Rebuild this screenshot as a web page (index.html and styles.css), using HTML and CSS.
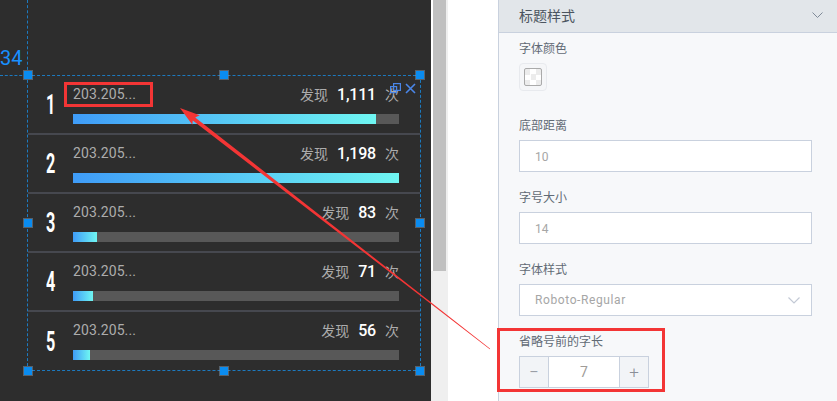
FILE: index.html
```html
<!DOCTYPE html>
<html lang="en">
<head>
    <meta charset="UTF-8">
    <title>标题样式</title>
    <link rel="stylesheet" href="styles.css">
</head>
<body>
    <div class="page">
        <div class="stage">
            <div class="guide-v"></div>
            <div class="guide-h"></div>
            <div class="guide-num">34</div>

            <div class="widget">
                <div class="row">
                    <div class="rank"><span>1</span></div>
                    <div class="main">
                        <div class="head"><span class="ip">203.205...</span><span class="tip">发现</span><span class="num">1,111</span><span class="tip">次</span></div>
                        <div class="track"><div class="fill" style="width: 303px"></div></div>
                    </div>
                </div>
                <div class="row">
                    <div class="rank"><span>2</span></div>
                    <div class="main">
                        <div class="head"><span class="ip">203.205...</span><span class="tip">发现</span><span class="num">1,198</span><span class="tip">次</span></div>
                        <div class="track"><div class="fill" style="width: 326px"></div></div>
                    </div>
                </div>
                <div class="row">
                    <div class="rank"><span>3</span></div>
                    <div class="main">
                        <div class="head"><span class="ip">203.205...</span><span class="tip">发现</span><span class="num">83</span><span class="tip">次</span></div>
                        <div class="track"><div class="fill" style="width: 24px"></div></div>
                    </div>
                </div>
                <div class="row">
                    <div class="rank"><span>4</span></div>
                    <div class="main">
                        <div class="head"><span class="ip">203.205...</span><span class="tip">发现</span><span class="num">71</span><span class="tip">次</span></div>
                        <div class="track"><div class="fill" style="width: 20px"></div></div>
                    </div>
                </div>
                <div class="row last">
                    <div class="rank"><span>5</span></div>
                    <div class="main">
                        <div class="head"><span class="ip">203.205...</span><span class="tip">发现</span><span class="num">56</span><span class="tip">次</span></div>
                        <div class="track"><div class="fill" style="width: 17px"></div></div>
                    </div>
                </div>

                <!-- widget tools and resize handles -->
                <div class="tools">
                    <svg width="11" height="11" viewBox="0 0 11 11" fill="none" stroke="#4a86e8" stroke-width="1.2">
                        <rect x="3.6" y="0.6" width="6.8" height="6.8"/>
                        <rect x="0.6" y="3.6" width="6" height="6"/>
                    </svg>
                    <svg width="11" height="11" viewBox="0 0 11 11" fill="none" stroke="#4a86e8" stroke-width="1.6">
                        <path d="M1 1L10 10M10 1L1 10"/>
                    </svg>
                </div>
                <i class="handle tl"></i><i class="handle tc"></i><i class="handle tr"></i>
                <i class="handle ml"></i><i class="handle mr"></i>
                <i class="handle bl"></i><i class="handle bc"></i><i class="handle br"></i>
            </div>
        </div>

        <div class="scrollbar"><div class="thumb"></div></div>
        <div class="blank"></div>

        <div class="panel">
            <div class="panel-title">
                <span>标题样式</span>
                <svg width="11" height="6" viewBox="0 0 11 6" fill="none" stroke="#7f8a98" stroke-width="1"><path d="M0.5 0.5L5.5 5.5L10.5 0.5"/></svg>
            </div>
            <div class="panel-body">
                <div class="field swatch-field">
                    <div class="label">字体颜色</div>
                    <div class="swatch"><div class="checker"></div></div>
                </div>
                <div class="field">
                    <div class="label">底部距离</div>
                    <div class="input">10</div>
                </div>
                <div class="field">
                    <div class="label">字号大小</div>
                    <div class="input">14</div>
                </div>
                <div class="field">
                    <div class="label">字体样式</div>
                    <div class="input select">
                        <span>Roboto-Regular</span>
                        <svg width="12" height="7" viewBox="0 0 12 7" fill="none" stroke="#c3c9d5" stroke-width="1.2"><path d="M0.5 0.5L6 6L11.5 0.5"/></svg>
                    </div>
                </div>
                <div class="field">
                    <div class="label">省略号前的字长</div>
                    <div class="stepper">
                        <div class="step">−</div>
                        <div class="step-value">7</div>
                        <div class="step">+</div>
                    </div>
                </div>
            </div>
        </div>
    </div>

    <!-- red annotations drawn over the screenshot -->
    <div class="mark mark-ip"></div>
    <div class="mark mark-stepper"></div>
    <svg class="arrow" width="837" height="401" viewBox="0 0 837 401">
        <polygon fill="#f33535" points="180,108 199.7,115.3 195.2,117.4 490.2,348.8 489.8,349.2 192.8,120.6 192.3,124.7"/>
    </svg>
</body>
</html>
```
FILE: styles.css
```css
* {
    box-sizing: border-box;
}

body {
    margin: 0;
    overflow: hidden;
    font-family: Roboto, "Noto Sans CJK SC", sans-serif;
    background-color: #fff;
}

.page {
    display: flex;
    height: 401px;
}

/* left canvas */
.stage {
    position: relative;
    width: 431px;
    padding: 75px 0 0 27px;
    background-color: #2d2d2d;
    overflow: hidden;
}

.guide-v {
    position: absolute;
    left: 27px;
    top: 0;
    height: 75px;
    border-left: 1px dashed #1c7ac0;
}

.guide-h {
    position: absolute;
    left: 0;
    top: 75px;
    width: 27px;
    border-top: 1px dashed #1c7ac0;
}

.guide-num {
    position: absolute;
    left: 0;
    top: 46px;
    font-size: 20px;
    line-height: 24px;
    color: #1890ff;
}

.widget {
    position: relative;
    width: 394px;
    height: 296px;
    border: 1px dashed #1c7ac0;
}

.row {
    display: flex;
    height: 59px;
    border-bottom: 2px solid #46484f;
}

.row.last {
    border-bottom: none;
}

.rank {
    display: flex;
    justify-content: center;
    align-items: center;
    width: 45px;
    padding-left: 1px;
    font-size: 27px;
    font-weight: 700;
    color: #fff;
}

.rank span {
    display: block;
    transform: scaleX(0.6);
}

.main {
    width: 326px;
    padding-top: 8px;
}

.head {
    display: flex;
    align-items: center;
    height: 20px;
    margin-bottom: 10px;
    font-size: 14px;
    color: #acacac;
}

.ip {
    margin-right: auto;
    letter-spacing: 0.1px;
}

.num {
    margin: 0 9px;
    font-size: 16px;
    font-weight: 500;
    letter-spacing: -0.2px;
    color: #fff;
}

.track {
    height: 10px;
    background-color: #585858;
}

.fill {
    height: 10px;
    background: linear-gradient(to right, #3f9cf8, #6ff6f2);
}

.tools {
    position: absolute;
    right: 4px;
    top: 7px;
    display: flex;
    gap: 4px;
}

.handle {
    position: absolute;
    width: 8px;
    height: 8px;
    background-color: #0a8cf0;
    box-shadow: 0 0 0 1px rgba(130, 150, 170, 0.5);
}

.tl, .tc, .tr { top: -5px; }
.ml, .mr { top: 143px; }
.bl, .bc, .br { bottom: -5px; }
.tl, .ml, .bl { left: -4px; }
.tc, .bc { left: 192px; }
.tr, .mr, .br { right: -4px; }

/* scrollbar column */
.scrollbar {
    width: 17px;
    background-color: #efefef;
}

.thumb {
    width: 15px;
    height: 271px;
    border-left: 2px solid #fff;
    background-color: #c0c0c0;
}

.blank {
    width: 50px;
}

/* right settings panel */
.panel {
    flex: 1;
    border-left: 1px solid #c9d1de;
    background-color: #f7f8fa;
}

.panel-title {
    display: flex;
    justify-content: space-between;
    align-items: center;
    height: 33px;
    padding: 0 14px 2px 20px;
    border-bottom: 1px solid #c9d1de;
    background-color: #e2e6ea;
    font-size: 14px;
    color: #4c5560;
}

.panel-body {
    display: flex;
    flex-direction: column;
    gap: 17px;
    padding: 7px 25px 0 20px;
}

.swatch-field {
    margin-bottom: 9px;
}

.label {
    height: 18px;
    margin-bottom: 5px;
    font-size: 12px;
    line-height: 19px;
    color: #616a75;
}

.swatch {
    display: flex;
    justify-content: center;
    align-items: center;
    width: 28px;
    height: 28px;
    border: 1px solid #e8eaee;
    border-radius: 4px;
    background-color: #f5f6f8;
}

.checker {
    width: 18px;
    height: 18px;
    border: 1px solid #aaa;
    border-radius: 2px;
    background-color: #fff;
    background-image: conic-gradient(#fff 25%, #ececec 0 50%, #fff 0 75%, #ececec 0);
    background-size: 11px 11px;
}

.input {
    height: 32px;
    padding-left: 15px;
    border: 1px solid #c9d1de;
    background-color: #fff;
    font-size: 12px;
    line-height: 32px;
    color: #a6a6a6;
}

.select {
    display: flex;
    justify-content: space-between;
    align-items: center;
    padding-right: 11px;
    letter-spacing: 0.6px;
}

.stepper {
    display: flex;
    width: 130px;
    height: 32px;
    border: 1px solid #c9d1de;
    font-size: 14px;
    line-height: 30px;
    text-align: center;
    color: #8a8f98;
}

.step {
    width: 28px;
    background-color: #f2f4f7;
    font-size: 17px;
    font-weight: 300;
}

.step-value {
    flex: 1;
    border-left: 1px solid #c9d1de;
    border-right: 1px solid #c9d1de;
    background-color: #fff;
    color: #a09c98;
}

/* annotations */
.mark {
    position: absolute;
    border: 3px solid #f33535;
}

.mark-ip {
    left: 64px;
    top: 82px;
    width: 89px;
    height: 25px;
}

.mark-stepper {
    left: 497px;
    top: 328px;
    width: 168px;
    height: 64px;
}

.arrow {
    position: absolute;
    left: 0;
    top: 0;
    pointer-events: none;
}
```
